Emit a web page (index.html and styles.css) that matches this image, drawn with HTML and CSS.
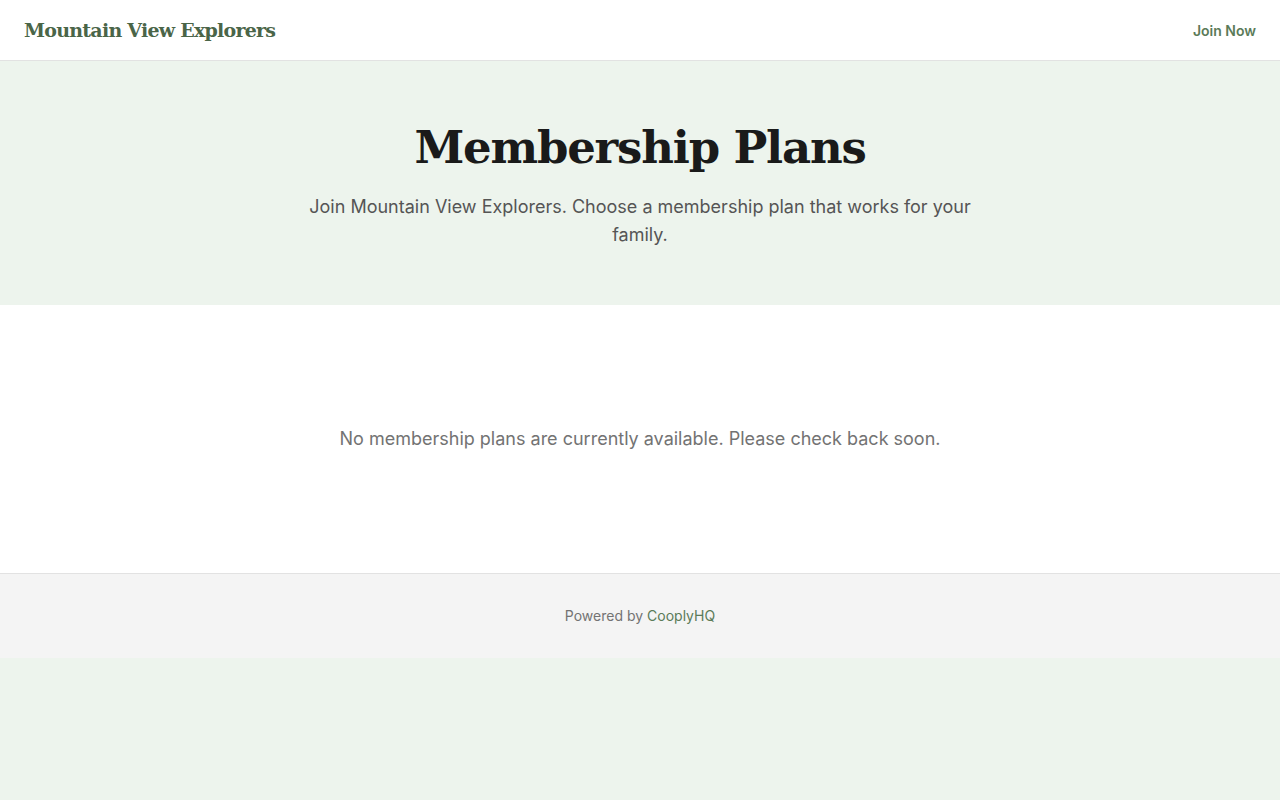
FILE: index.html
```html
<!DOCTYPE html>
<html lang="en">

<head>
    <meta charset="UTF-8">
    <meta name="viewport" content="width=device-width, initial-scale=1.0">
    <title>Membership Plans - Mountain View Explorers</title>
    <link rel="stylesheet" href="styles.css">
</head>

<body>
    <header class="site-header">
        <a class="brand" href="#">Mountain View Explorers</a>
        <a class="join-link" href="#">Join Now</a>
    </header>

    <section class="hero">
        <h1>Membership Plans</h1>
        <p>Join Mountain View Explorers. Choose a membership plan that works for your family.</p>
    </section>

    <main class="plans">
        <p class="empty">No membership plans are currently available. Please check back soon.</p>
    </main>

    <footer class="site-footer">
        Powered by <a href="#">CooplyHQ</a>
    </footer>
</body>

</html>
```

FILE: styles.css
```css
*,
*::after,
*::before {
    box-sizing: border-box;
}

body {
    font-family: Inter, 'Noto Sans', sans-serif;
    background: #edf4ed;
    color: #1a1a1a;
    margin: 0;
}

a {
    text-decoration: none;
}

.site-header {
    display: flex;
    justify-content: space-between;
    align-items: center;
    height: 61px;
    padding: 0 24px;
    background: #fff;
    border-bottom: 1px solid #e2e2e2;

    .brand {
        font-family: 'DejaVu Serif', 'Liberation Serif', serif;
        font-weight: 700;
        font-size: 19px;
        letter-spacing: -0.75px;
        color: #4a6548;
    }

    .join-link {
        font-size: 14px;
        font-weight: 600;
        color: #5b7b58;
    }
}

.hero {
    text-align: center;
    padding: 58px 24px 56px;

    h1 {
        font-family: 'DejaVu Serif', 'Liberation Serif', serif;
        font-size: 45px;
        font-weight: 700;
        letter-spacing: -1.2px;
        line-height: 58px;
        color: #1a1a1a;
        margin: 0 0 16px;
    }

    p {
        max-width: 672px;
        margin: 0 auto;
        font-size: 18px;
        line-height: 28px;
        color: #555;
    }
}

.plans {
    background: #fff;
    padding: 120px 24px;
    text-align: center;

    .empty {
        margin: 0;
        font-size: 18px;
        line-height: 28px;
        color: #737373;
    }
}

.site-footer {
    background: #f4f4f4;
    border-top: 1px solid #e2e2e2;
    padding: 32px 24px;
    text-align: center;
    font-size: 14px;
    line-height: 20px;
    color: #737373;

    a {
        color: #5b7b58;
    }
}
```
